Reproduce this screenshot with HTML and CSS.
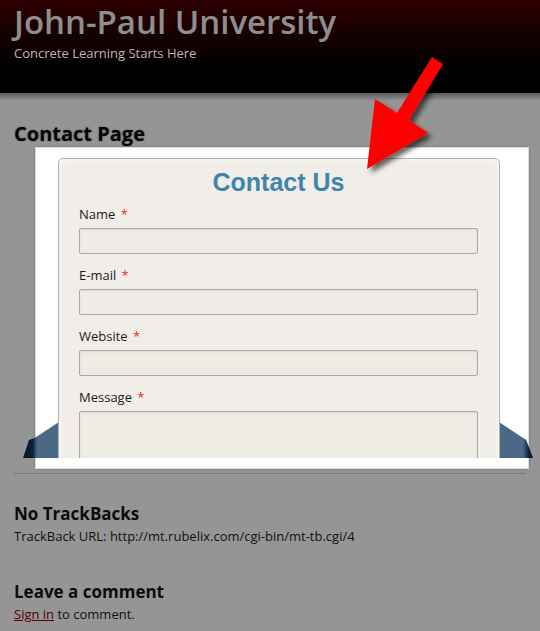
FILE: index.html
```html
<!DOCTYPE html>
<html>
<head>
<meta charset="utf-8">
<link rel="stylesheet" href="styles.css">
</head>
<body>
<header class="masthead">
  <h1 class="site-title">John-Paul University</h1>
  <p class="tagline">Concrete Learning Starts Here</p>
</header>
<main class="content">
  <h2 class="page-title">Contact Page</h2>
  <div class="shot">
    <div class="blue blue-left"></div>
    <div class="blue blue-right"></div>
    <div class="clip">
      <form class="card">
        <h3 class="card-title">Contact Us</h3>
        <div class="field">
          <label class="label">Name <span class="req">*</span></label>
          <div class="input"></div>
        </div>
        <div class="field">
          <label class="label">E-mail <span class="req">*</span></label>
          <div class="input"></div>
        </div>
        <div class="field">
          <label class="label">Website <span class="req">*</span></label>
          <div class="input"></div>
        </div>
        <div class="field">
          <label class="label">Message <span class="req">*</span></label>
          <div class="input textarea"></div>
        </div>
      </form>
    </div>
  </div>
  <hr class="rule">
  <section class="block">
    <h2 class="block-title">No TrackBacks</h2>
    <p class="text">TrackBack URL: http://mt.rubelix.com/cgi-bin/mt-tb.cgi/4</p>
  </section>
  <section class="block block-comment">
    <h2 class="block-title">Leave a comment</h2>
    <p class="text"><a class="link" href="#">Sign in</a> to comment.</p>
  </section>
</main>
<svg class="arrow" width="540" height="200" viewBox="0 0 540 200">
  <defs>
    <filter id="sh" x="-20%" y="-20%" width="150%" height="150%">
      <feGaussianBlur in="SourceAlpha" stdDeviation="2.5"/>
      <feOffset dx="4" dy="4" result="b"/>
      <feComponentTransfer><feFuncA type="linear" slope="0.6"/></feComponentTransfer>
      <feMerge><feMergeNode/><feMergeNode in="SourceGraphic"/></feMerge>
    </filter>
  </defs>
  <polygon filter="url(#sh)" fill="#ff0000" points="432,57 443,64 409,120 428,133 367,169 375,99 397,113"/>
</svg>
</body>
</html>
```
FILE: styles.css
```css
* { box-sizing: border-box; }
html, body { margin: 0; padding: 0; }
body {
  width: 540px;
  height: 631px;
  overflow: hidden;
  background: #959595;
  font-family: "Open Sans", "DejaVu Sans", sans-serif;
  position: relative;
}
.masthead {
  height: 93px;
  background: linear-gradient(#2e0000 0px, #120000 40px, #000 70px);
  padding: 3px 14px 0;
}
.site-title {
  margin: 0;
  font-size: 33px;
  font-weight: 600;
  color: #8e8e8e;
  line-height: 38px;
}
.tagline {
  margin: 3px 0 0;
  font-size: 13px;
  color: #c4b3bd;
  line-height: 18px;
}
.content {
  background: linear-gradient(#5a5a5a 0px, #959595 8px);
  padding: 27px 14px 0;
}
.page-title {
  margin: 0;
  font-size: 20px;
  font-weight: 700;
  color: #050505;
  line-height: 27px;
  text-shadow: 0 0 2px rgba(0,0,0,0.4);
}
.shot {
  position: relative;
  margin-left: 21px;
  width: 494px;
  height: 322px;
  background: #fff;
  border: 1px solid #dcdcdc;
  box-shadow: 0 0 2px rgba(0,0,0,0.25);
  padding: 10px 28px 10px 22px;
}
.blue {
  position: absolute;
  bottom: 10px;
  height: 36px;
  background: #4a6986;
}
.blue-left {
  left: -13px;
  width: 36px;
  clip-path: polygon(100% 0, 100% 100%, 0 100%, 6px 50%, 12px 44%);
  background: linear-gradient(90deg, #081428 0px, #0d1e35 10px, #4a6986 14px);
}
.blue-right {
  right: -5px;
  width: 34px;
  clip-path: polygon(0 0, 80% 50%, 100% 100%, 0 100%);
  background: linear-gradient(90deg, #4a6986 24px, #0d1e35 30px, #081428 34px);
}
.clip {
  position: relative;
  height: 100%;
  overflow: hidden;
}
.card {
  height: 340px;
  background: #f1eee9;
  border: 1px solid #b4b1aa;
  border-radius: 5px;
  padding: 8px 21px 0 20px;
  box-shadow: inset 0 0 6px rgba(255,255,255,0.8);
}
.card-title {
  margin: 0 0 10px;
  text-align: center;
  font-family: "Liberation Sans", Arial, sans-serif;
  font-size: 25px;
  font-weight: 700;
  color: #3f85aa;
  line-height: 30px;
}
.field {
  display: flex;
  flex-direction: column;
  gap: 6px;
  margin-bottom: 14px;
}
.label {
  font-size: 13px;
  color: #1a1a1a;
  line-height: 15px;
}
.req {
  color: #ee2222;
  margin-left: 2px;
}
.input {
  height: 26px;
  background: #eeebe5;
  border: 1px solid #a9a9a6;
  border-radius: 2px;
  box-shadow: inset 0 1px 2px rgba(0,0,0,0.08);
}
.textarea { height: 80px; }
.rule {
  margin: 4px 0 0;
  border: 0;
  border-top: 1px solid #777;
  height: 1px;
}
.block { padding-top: 28px; }
.block-comment { padding-top: 33px; }
.block-title {
  margin: 0;
  font-size: 17px;
  font-weight: 700;
  color: #0c0c0c;
  line-height: 24px;
}
.text {
  margin: 0;
  font-size: 13px;
  color: #111;
  line-height: 21px;
}
.link { color: #5a0000; }
.arrow {
  position: absolute;
  left: 0;
  top: 0;
  pointer-events: none;
}
```
